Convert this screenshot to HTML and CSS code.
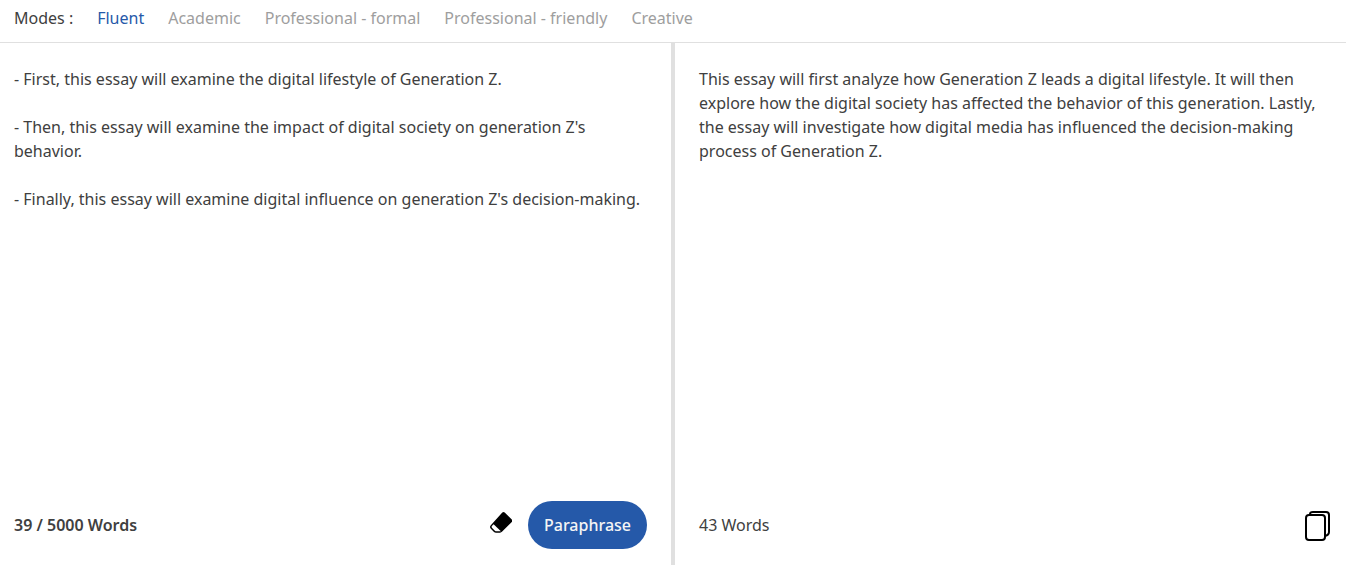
FILE: index.html
```html
<!DOCTYPE html>
<html lang="en">
<head>
    <meta charset="UTF-8">
    <title>Paraphraser</title>
    <link rel="stylesheet" href="styles.css">
</head>
<body>
    <nav class="modes">
        <span>Modes :</span>
        <button type="button" class="mode active">Fluent</button>
        <button type="button" class="mode">Academic</button>
        <button type="button" class="mode">Professional - formal</button>
        <button type="button" class="mode">Professional - friendly</button>
        <button type="button" class="mode">Creative</button>
    </nav>

    <main class="panels">
        <form class="panel input-panel">
            <textarea class="text" aria-label="Text to paraphrase" spellcheck="false">
- First, this essay will examine the digital lifestyle of Generation Z.

- Then, this essay will examine the impact of digital society on generation Z's behavior.

- Finally, this essay will examine digital influence on generation Z's decision-making.</textarea>
            <div class="footer">
                <span class="count bold">39 / 5000 Words</span>
                <button type="button" class="icon-button" aria-label="Clear text">
                    <svg width="24" height="28" viewBox="0 0 24 28">
                        <path d="M14.3 1.5Q15.5.6 16.7 1.5L23.8 8.6Q24.6 9.9 23.8 11L14.2 20.6Q13.2 21.7 12 21.7H8Q6.8 21.7 6 20.9L2.6 17.4Q1.5 16 2.6 14.6Z"/>
                        <path d="M5.6 13.2 12.9 20.3H8.4Q7.5 20.3 6.9 19.7L3.9 16.7Q3.2 15.9 3.9 15.1Z" fill="#fff"/>
                    </svg>
                </button>
                <button type="submit" class="submit">Paraphrase</button>
            </div>
        </form>

        <div class="divider"></div>

        <section class="panel output-panel">
            <p class="text">This essay will first analyze how Generation Z leads a digital lifestyle. It will then explore how the digital society has affected the behavior of this generation. Lastly, the essay will investigate how digital media has influenced the decision-making process of Generation Z.</p>
            <div class="footer">
                <span class="count">43 Words</span>
                <button type="button" class="icon-button" aria-label="Copy result">
                    <svg width="28" height="32" viewBox="0 0 28 32" fill="none" stroke="#000" stroke-width="2">
                        <rect x="4" y="6" width="19" height="25" rx="3"/>
                        <path d="M8 6V5Q8 3 11 3H24Q27 3 27 6V23Q27 26 23 27"/>
                    </svg>
                </button>
            </div>
        </section>
    </main>
</body>
</html>
```
FILE: styles.css
```css
* {
    box-sizing: border-box;
}
body {
    margin: 0;
    min-height: 100vh;
    display: flex;
    flex-direction: column;
    font-family: "Noto Sans", sans-serif;
    font-size: 16px;
    line-height: 24px;
    color: #404040;
    background: #fff;
}
button {
    padding: 0;
    border: none;
    background: none;
    font: inherit;
    cursor: pointer;
}
.modes {
    display: flex;
    gap: 24px;
    padding: 6px 14px 12px;
    border-bottom: 1px solid #e0e0e0;
}
.mode {
    color: #9e9e9e;
}
.mode.active {
    color: #2559a9;
}
.panels {
    flex: 1;
    display: grid;
    grid-template-columns: 1fr 4px 1fr;
}
.divider {
    background: #e0e0e0;
}
.panel {
    display: flex;
    flex-direction: column;
    min-width: 0;
    padding-top: 24px;
    padding-bottom: 16px;
}
.input-panel {
    padding-left: 14px;
    padding-right: 24px;
}
.output-panel {
    padding-left: 24px;
    padding-right: 16px;
}
.text {
    flex: 1;
    margin: 0;
    padding: 0;
    border: none;
    outline: none;
    resize: none;
    font: inherit;
    color: inherit;
    background: none;
}
.footer {
    display: flex;
    align-items: center;
    gap: 16px;
    min-height: 48px;
}
.count {
    margin-right: auto;
}
.bold {
    font-weight: 600;
}
.icon-button svg {
    display: block;
}
.submit {
    height: 48px;
    padding: 0 16px;
    border-radius: 24px;
    background: #2559a9;
    color: #f5f5f5;
    font-weight: 500;
}
```
